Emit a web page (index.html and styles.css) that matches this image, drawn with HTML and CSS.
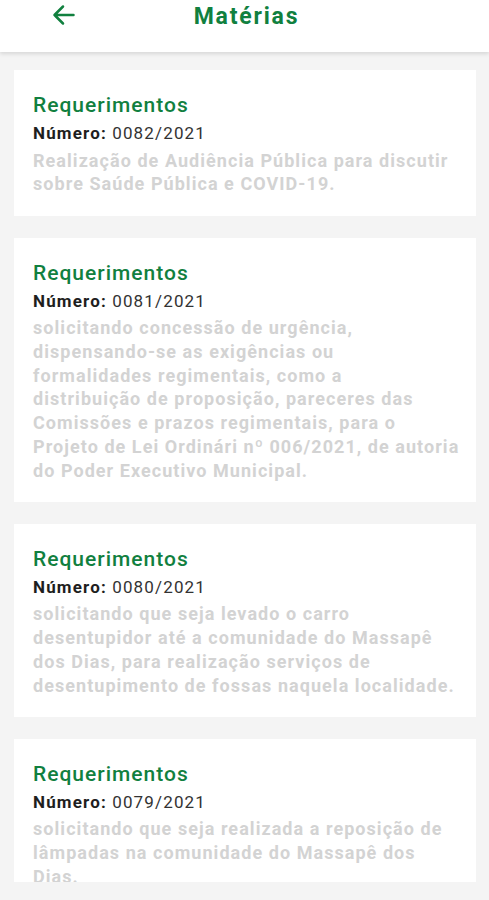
FILE: index.html
```html
<!DOCTYPE html>
<html lang="pt-BR">
<head>
<meta charset="utf-8">
<title>Matérias</title>
<link rel="stylesheet" href="styles.css">
</head>
<body>
<div class="screen">
  <header class="topbar">
    <button class="back" aria-label="Voltar">
      <svg width="23" height="22" viewBox="0 0 23 22"><path d="M21.5 11H2.5M11 2.5 2.5 11 11 19.5" fill="none" stroke="#11803f" stroke-width="2.5" stroke-linecap="round" stroke-linejoin="round"/></svg>
    </button>
    <h1 class="title">Matérias</h1>
  </header>
  <main class="list">
    <article class="card">
      <h2 class="card-type">Requerimentos</h2>
      <p class="card-num"><b>Número:</b> 0082/2021</p>
      <p class="card-desc">Realização de Audiência Pública para discutir sobre Saúde Pública e COVID-19.</p>
    </article>
    <article class="card">
      <h2 class="card-type">Requerimentos</h2>
      <p class="card-num"><b>Número:</b> 0081/2021</p>
      <p class="card-desc">solicitando concessão de urgência, dispensando-se as exigências ou<br>formalidades regimentais, como a<br>distribuição de proposição, pareceres das Comissões e prazos regimentais, para o Projeto de Lei Ordinári nº 006/2021, de autoria do Poder Executivo Municipal.</p>
    </article>
    <article class="card">
      <h2 class="card-type">Requerimentos</h2>
      <p class="card-num"><b>Número:</b> 0080/2021</p>
      <p class="card-desc">solicitando que seja levado o carro desentupidor até a comunidade do Massapê dos Dias, para realização serviços de desentupimento de fossas naquela localidade.</p>
    </article>
    <article class="card">
      <h2 class="card-type">Requerimentos</h2>
      <p class="card-num"><b>Número:</b> 0079/2021</p>
      <p class="card-desc">solicitando que seja realizada a reposição de lâmpadas na comunidade do Massapê dos Dias.</p>
    </article>
  </main>
</div>
</body>
</html>
```
FILE: styles.css
```css
* { box-sizing: border-box; }
html, body { margin: 0; padding: 0; }
body {
  background: #f4f4f4;
  font-family: Roboto, "Liberation Sans", Arial, sans-serif;
  width: 489px;
  height: 900px;
  overflow: hidden;
}
.screen {
  display: flex;
  flex-direction: column;
  height: 882px;
}
.topbar {
  position: relative;
  z-index: 2;
  height: 52px;
  flex: none;
  background: #fff;
  box-shadow: 0 2px 4px rgba(0,0,0,0.12);
  display: flex;
  align-items: flex-start;
  justify-content: center;
}
.back {
  position: absolute;
  left: 52px;
  top: 4px;
  width: 23px;
  height: 22px;
  padding: 0;
  border: 0;
  background: none;
}
.back svg { display: block; }
.title {
  margin: 0 0 0 4px;
  padding-top: 2px;
  font-size: 23px;
  line-height: 30px;
  font-weight: 700;
  letter-spacing: 1.8px;
  color: #11803f;
}
.list {
  flex: 1;
  overflow: hidden;
  padding: 18px 13px 0 14px;
  display: flex;
  flex-direction: column;
  gap: 21.5px;
}
.card {
  flex: none;
  background: #fff;
  padding: 21px 16px 20px 19px;
}
.card-type {
  margin: 0;
  font-size: 21px;
  line-height: 28px;
  font-weight: 500;
  letter-spacing: 1px;
  color: #11803f;
}
.card-num {
  margin: 0;
  font-size: 17px;
  line-height: 29.7px;
  letter-spacing: 1.15px;
  color: #333;
}
.card-num b { color: #1e1e1e; font-weight: 700; }
.card-desc {
  margin: 0;
  font-size: 18px;
  line-height: 23.7px;
  font-weight: 700;
  letter-spacing: 1.05px;
  color: #d3d3d3;
}
```
